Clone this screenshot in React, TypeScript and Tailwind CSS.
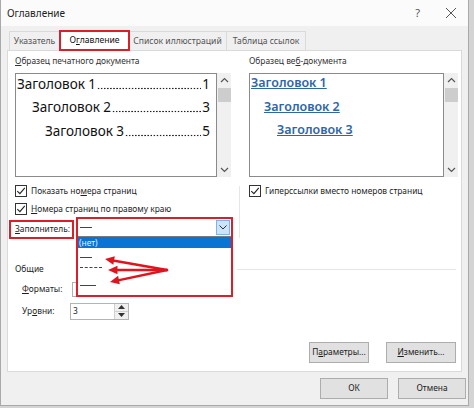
import React from "react";

function CheckBox() {
  return (
    <span className="flex h-[12px] w-[12px] shrink-0 items-center justify-center border border-[#333] bg-white">
      <svg width="10" height="10" viewBox="0 0 10 10">
        <path d="M1.3 5.1 L3.9 7.7 L8.8 1.8" fill="none" stroke="#222" strokeWidth="1.1" />
      </svg>
    </span>
  );
}

function ScrollBar() {
  return (
    <div className="flex w-[14px] shrink-0 flex-col items-center bg-[#f0f0f0]">
      <svg className="mt-[4px]" width="9" height="6" viewBox="0 0 9 6">
        <path d="M1 5 L4.5 1.5 L8 5" fill="none" stroke="#555" strokeWidth="1.2" />
      </svg>
      <div className="mt-[5px] h-[14px] w-[13px] bg-[#cdcdcd]" />
      <div className="flex-1" />
      <svg className="mb-[4px]" width="9" height="6" viewBox="0 0 9 6">
        <path d="M1 1 L4.5 4.5 L8 1" fill="none" stroke="#555" strokeWidth="1.2" />
      </svg>
    </div>
  );
}

function Leader({ title, page, indent }: { title: string; page: string; indent: string }) {
  return (
    <div className={`flex h-[23.5px] min-w-0 items-center whitespace-nowrap ${indent}`}>
      <span className="shrink-0">{title}</span>
      <div className="mx-[1px] mt-[9px] h-[3px] min-w-0 flex-1 bg-[radial-gradient(circle,#222_0.75px,transparent_1.1px)] bg-[length:3.1px_3px] bg-repeat-x" />
      <span className="shrink-0">{page}</span>
    </div>
  );
}

function Btn({ children, w }: { children: React.ReactNode; w: string }) {
  return (
    <div
      className={`flex h-[21px] items-center justify-center whitespace-nowrap border border-[#adadad] bg-[#e1e1e1] text-[8.4px] text-[#1a1a1a] ${w}`}
    >
      {children}
    </div>
  );
}

export default function App() {
  return (
    <div className="relative h-[408px] w-[474px] overflow-hidden bg-[#d4d4d4] font-['Noto_Sans',sans-serif] text-[#1e1e1e]">
      <div className="flex h-[406px] w-[469px] flex-col border-r border-b border-l border-[#a9a9a9] bg-[#f0f0f0]">
        {/* title bar */}
        <div className="flex h-[26px] items-center bg-[#fbfbfb] pl-[6px] pr-[11px] text-[10px]">
          <span className="flex-1">Оглавление</span>
          <span className="mr-[25px] text-[11px] text-[#555]">?</span>
          <svg width="12" height="12" viewBox="0 0 12 12">
            <path d="M1 1 L11 11 M11 1 L1 11" stroke="#555" strokeWidth="1" />
          </svg>
        </div>

        {/* tabs */}
        <div className="flex h-[24px] items-end whitespace-nowrap pl-[8px] text-[8.6px] text-[#555]">
          <div className="flex h-[19px] w-[51px] items-center justify-center border border-b-0 border-[#dadada]">
            Указатель
          </div>
          <div className="flex h-[20px] w-[69px] items-center justify-center border border-b-0 border-[#d0d0d0] bg-white text-[#111]">
            О<span className="underline">г</span>лавление
          </div>
          <div className="flex h-[19px] w-[98px] items-center justify-center border border-b-0 border-l-0 border-[#dadada]">
            Список иллюстраций
          </div>
          <div className="flex h-[19px] w-[79px] items-center justify-center border border-b-0 border-l-0 border-[#dadada]">
            Таблица ссылок
          </div>
        </div>

        {/* panel */}
        <div className="mx-[6px] flex h-[322px] flex-col border border-[#dadada] bg-white text-[8.4px]">
          <div className="flex pb-[21px] pl-[7px]">
            {/* left column */}
            <div className="flex w-[216px] shrink-0 flex-col">
              <div className="mt-[4px] h-[12px] leading-[12px] text-[#333]">
                <span className="underline">О</span>бразец печатного документа
              </div>
              <div className="mt-[6px] flex h-[104px] min-w-0">
                <div className="min-w-0 flex-1 overflow-hidden border border-[#8a8a8a] px-[1px] text-[13.5px] text-[#111]">
                  <div className="-mt-[2px]">
                    <Leader title="Заголовок 1" page="1" indent="pr-[5px]" />
                    <Leader title="Заголовок 2" page="3" indent="pl-[15px] pr-[5px]" />
                    <Leader title="Заголовок 3" page="5" indent="pl-[28px] pr-[5px]" />
                  </div>
                </div>
                <ScrollBar />
              </div>
              <div className="mt-[5px] flex h-[18px] items-center gap-[4px]">
                <CheckBox />
                <span>
                  Показать но<span className="underline">м</span>ера страниц
                </span>
              </div>
              <div className="flex h-[18px] items-center gap-[4px]">
                <CheckBox />
                <span>
                  <span className="underline">Н</span>омера страниц по правому краю
                </span>
              </div>
              <div className="mt-[2px] flex h-[18px] items-center">
                <span>
                  <span className="underline">З</span>аполнитель:
                </span>
              </div>
            </div>

            {/* divider */}
            <div className="ml-[8px] mt-[135px] w-px bg-[#e6e6e6]" />

            {/* right column */}
            <div className="ml-[9px] flex w-[209px] shrink-0 flex-col">
              <div className="mt-[4px] h-[12px] leading-[12px] text-[#333]">
                Образец ве<span className="underline">б</span>-документа
              </div>
              <div className="mt-[6px] flex h-[104px]">
                <div className="min-w-0 flex-1 overflow-hidden whitespace-nowrap border border-[#8a8a8a] text-[12.5px] font-semibold text-[#2f66a8] underline">
                  <div className="-mt-[2px]">
                    <div className="flex h-[23.5px] items-center pl-[1px]">Заголовок 1</div>
                    <div className="flex h-[23.5px] items-center pl-[14px]">Заголовок 2</div>
                    <div className="flex h-[23.5px] items-center pl-[27px]">Заголовок 3</div>
                  </div>
                </div>
                <ScrollBar />
              </div>
              <div className="mt-[5px] flex h-[18px] items-center gap-[4px]">
                <CheckBox />
                <span>Гиперссылки вместо номеров страниц</span>
              </div>
            </div>
          </div>

          {/* general group */}
          <div className="mt-[2px] flex h-[16px] items-center pl-[7px] pr-[5px]">
            <span>Общие</span>
            <div className="ml-[193px] h-px flex-1 bg-[#e6e6e6]" />
          </div>
          <div className="mt-[3px] flex h-[18px] items-center pl-[14px]">
            <span className="w-[50px]">
              <span className="underline">Ф</span>орматы:
            </span>
            <div className="h-[15px] w-[120px] border border-[#b0b0b0] bg-white" />
          </div>
          <div className="mt-[4px] flex h-[18px] items-center pl-[14px]">
            <span className="w-[48px]">
              Ур<span className="underline">о</span>вни:
            </span>
            <div className="flex h-[17px] w-[59px] border border-[#b4b4b4] bg-white">
              <span className="flex-1 pl-[2px] leading-[14px]">3</span>
              <div className="flex w-[14px] flex-col border-l border-[#d0d0d0] bg-[#f0f0f0]">
                <div className="flex flex-1 items-center justify-center border-b border-[#d0d0d0]">
                  <svg width="7" height="4" viewBox="0 0 7 4">
                    <path d="M0 4 L3.5 0 L7 4 Z" fill="#333" />
                  </svg>
                </div>
                <div className="flex flex-1 items-center justify-center">
                  <svg width="7" height="4" viewBox="0 0 7 4">
                    <path d="M0 0 L3.5 4 L7 0 Z" fill="#333" />
                  </svg>
                </div>
              </div>
            </div>
          </div>

          <div className="flex-1" />
          <div className="mb-[8px] flex justify-end gap-[17px] pr-[5px]">
            <Btn w="w-[60px]">
              П<span className="underline">а</span>раметры...
            </Btn>
            <Btn w="w-[70px]">
              <span className="underline">И</span>зменить...
            </Btn>
          </div>
        </div>

        {/* bottom buttons */}
        <div className="mt-[6px] flex justify-end gap-[10px] pr-[2px]">
          <Btn w="w-[68px]">ОК</Btn>
          <Btn w="w-[68px]">Отмена</Btn>
        </div>
      </div>

      {/* annotation: selected tab */}
      <div className="pointer-events-none absolute left-[59px] top-[30px] h-[21px] w-[71px] border-2 border-[#dc1e28]" />
      {/* annotation: leader label */}
      <div className="pointer-events-none absolute left-[9px] top-[220px] h-[19px] w-[65px] border-2 border-[#dc1e28]" />

      {/* opened leader dropdown */}
      <div className="absolute left-[76px] top-[217px] flex h-[80px] w-[157px] flex-col border-2 border-[#dc1e28] bg-white text-[8.4px]">
        <div className="flex h-[18px] items-center border-b border-[#7a7a7a]">
          <div className="ml-[2px] h-px w-[12px] bg-[#444]" />
          <div className="flex-1" />
          <div className="mr-[1px] flex h-[15px] w-[14px] items-center justify-center border border-[#7eb4ea] bg-[#cce4f7]">
            <svg width="8" height="5" viewBox="0 0 8 5">
              <path d="M0.5 0.5 L4 4 L7.5 0.5" fill="none" stroke="#333" strokeWidth="1" />
            </svg>
          </div>
        </div>
        <div className="flex h-[11px] items-center bg-[#0a74d4] pl-[1px] leading-[11px] text-[#e8f2ff]">
          (нет)
        </div>
        <div className="flex h-[13px] items-end pb-[3px]">
          <div className="ml-[2px] h-px w-[12px] bg-[#444]" />
        </div>
        <div className="flex h-[13px] items-center">
          <div className="ml-[2px] w-[22px] border-t border-dashed border-[#444]" />
        </div>
        <div className="flex h-[13px] items-end pb-[1px]">
          <div className="ml-[2px] h-px w-[16px] bg-[#444]" />
        </div>
      </div>

      {/* annotation arrows */}
      <svg
        className="pointer-events-none absolute left-0 top-0"
        width="474"
        height="408"
        viewBox="0 0 474 408"
      >
        <g stroke="#e0141e" strokeWidth="2.4" strokeLinecap="round" fill="none">
          <path d="M167 270 L113 260.5" />
          <path d="M167 270 L116 270" />
          <path d="M167 270 L118 280.3" />
        </g>
        <g fill="#e0141e">
          <polygon points="105,259 114.8,256.3 113.3,264.8" />
          <polygon points="108,270 117.5,265.8 117.5,274.2" />
          <polygon points="110,282 119.8,284.2 118.1,275.8" />
        </g>
      </svg>
    </div>
  );
}
